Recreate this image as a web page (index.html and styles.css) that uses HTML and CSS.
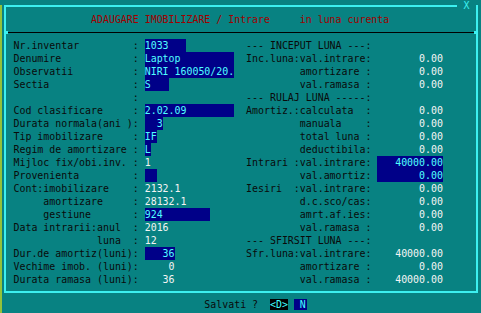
FILE: index.html
```html
<!DOCTYPE html>
<html>
<head>
<meta charset="utf-8">
<link rel="stylesheet" href="styles.css">
</head>
<body>
<div class="screen">
  <div class="window">
    <span class="close">X</span>
    <div class="title">             ADAUGARE IMOBILIZARE / Intrare     in luna curenta</div>
    <div class="rule"></div>
    <div class="form">
      <div class="row"><span class="l">Nr.inventar         : <span class="f w7">1033</span></span><span class="r">--- INCEPUT LUNA ---:</span></div>
      <div class="row"><span class="l">Denumire            : <span class="f w15">Laptop</span></span><span class="r">Inc.luna:val.intrare: <span class="n">0.00</span></span></div>
      <div class="row"><span class="l">Observatii          : <span class="f w15">NIRI 160050/20.</span></span><span class="r">         amortizare : <span class="n">0.00</span></span></div>
      <div class="row"><span class="l">Sectia              : <span class="f w4">S</span></span><span class="r">         val.ramasa : <span class="n">0.00</span></span></div>
      <div class="row"><span class="l">                    :</span><span class="r">--- RULAJ LUNA -----:</span></div>
      <div class="row"><span class="l">Cod clasificare     : <span class="f w15">2.02.09</span></span><span class="r">Amortiz.:calculata  : <span class="n">0.00</span></span></div>
      <div class="row"><span class="l">Durata normala(ani ): <span class="f w3 ra">3</span></span><span class="r">         manuala    : <span class="n">0.00</span></span></div>
      <div class="row"><span class="l">Tip imobilizare     : <span class="f w2">IF</span></span><span class="r">         total luna : <span class="n">0.00</span></span></div>
      <div class="row"><span class="l">Regim de amortizare : <span class="f w1">L</span></span><span class="r">         deductibila: <span class="n">0.00</span></span></div>
      <div class="row"><span class="l">Mijloc fix/obi.inv. : <span class="v">1</span></span><span class="r">Intrari :val.intrare: <span class="n f">40000.00</span></span></div>
      <div class="row"><span class="l">Provenienta         : <span class="f w2"></span></span><span class="r">         val.amortiz: <span class="n f">0.00</span></span></div>
      <div class="row"><span class="l">Cont:imobilizare    : <span class="v">2132.1</span></span><span class="r">Iesiri  :val.intrare: <span class="n">0.00</span></span></div>
      <div class="row"><span class="l">     amortizare     : <span class="v">28132.1</span></span><span class="r">         d.c.sco/cas: <span class="n">0.00</span></span></div>
      <div class="row"><span class="l">     gestiune       : <span class="f w11">924</span></span><span class="r">         amrt.af.ies: <span class="n">0.00</span></span></div>
      <div class="row"><span class="l">Data intrarii:anul  : <span class="v">2016</span></span><span class="r">         val.ramasa : <span class="n">0.00</span></span></div>
      <div class="row"><span class="l">              luna  : <span class="v">12</span></span><span class="r">--- SFIRSIT LUNA ---:</span></div>
      <div class="row"><span class="l">Dur.de amortiz(luni): <span class="f w5 ra">36</span></span><span class="r">Sfr.luna:val.intrare: <span class="n">40000.00</span></span></div>
      <div class="row"><span class="l">Vechime imob. (luni): <span class="v w5 ra">0</span></span><span class="r">         amortizare : <span class="n">0.00</span></span></div>
      <div class="row"><span class="l">Durata ramasa (luni): <span class="v w5 ra">36</span></span><span class="r">         val.ramasa : <span class="n">40000.00</span></span></div>
    </div>
  </div>
  <div class="prompt">                                Salvati ?  <span class="d">&lt;D&gt;</span> <span class="nb"> N</span></div>
</div>
</body>
</html>
```
FILE: styles.css
```css
* { box-sizing: border-box; }
html, body { margin: 0; padding: 0; }
body { background: #088282; width: 481px; height: 313px; overflow: hidden; }

.screen {
  width: 481px;
  height: 313px;
  background: #088282;
  border-left: 2px solid #94c23a;
  border-bottom: 2px solid #94c23a;
  font-family: "DejaVu Sans Mono", monospace;
  font-size: 9.92px;
  color: #0a0a0a;
}

.window {
  position: relative;
  margin: 5px 3px 0 2px;
  height: 288px;
  border: 2px solid #3cf0f0;
}

.close {
  position: absolute;
  top: -7px;
  right: 0;
  width: 19px;
  height: 12px;
  line-height: 12px;
  text-align: center;
  background: #088282;
  color: #3cf0f0;
}

.title {
  height: 25px;
  line-height: 25px;
  padding-left: 7.5px;
  white-space: pre;
  color: #a00000;
}

.rule {
  position: relative;
  height: 1px;
  margin: 0 1px;
  background: #000;
}
.rule::before, .rule::after {
  content: "";
  position: absolute;
  top: -1px;
  width: 2px;
  height: 3px;
  background: #3cf0f0;
}
.rule::before { left: -1px; }
.rule::after { right: -1px; }

.form { padding: 6px 0 0 7.5px; }

.row {
  display: flex;
  height: 13px;
  line-height: 13px;
  white-space: pre;
}
.l { flex: 0 0 39ch; }
.r { flex: 1 1 auto; }

.f {
  display: inline-block;
  vertical-align: top;
  height: 13px;
  background: #000088;
  color: #50ffff;
}
.v { color: #f4f4f4; }
.w1 { width: 1ch; }
.w2 { width: 2ch; }
.w3 { width: 3ch; }
.w4 { width: 4ch; }
.w5 { width: 5ch; display: inline-block; vertical-align: top; }
.w7 { width: 7ch; }
.w11 { width: 11ch; }
.w15 { width: 15ch; }
.ra { text-align: right; }

.n {
  display: inline-block;
  vertical-align: top;
  width: 11ch;
  text-align: right;
  color: #f4f4f4;
}
.n.f { color: #50ffff; }

.prompt {
  margin-top: 6px;
  height: 12px;
  line-height: 12px;
  padding-left: 11.5px;
  white-space: pre;
}
.d { background: #000; color: #40ffff; }
.nb { background: #000088; color: #40ffff; padding-right: 1px; }
```
